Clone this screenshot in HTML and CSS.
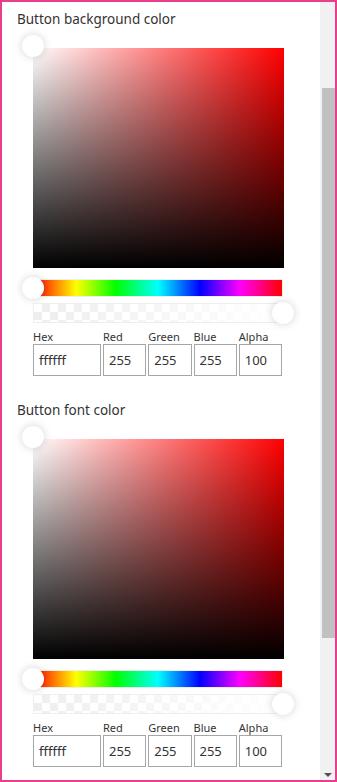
FILE: index.html
```html
<!DOCTYPE html>
<html lang="en">
  <head>
    <meta charset="UTF-8" />
    <meta name="viewport" content="width=device-width, initial-scale=1.0" />
    <title>Button colors</title>
    <link rel="stylesheet" href="styles.css">
  </head>
  <body>
    <div class="frame">
      <div class="content">
        <div class="section">
          <h2 class="section-title">Button background color</h2>
          <div class="picker">
            <div class="saturation">
              <span class="handle handle-sat"></span>
            </div>
            <div class="hue">
              <span class="handle handle-left"></span>
            </div>
            <div class="alpha">
              <span class="handle handle-right"></span>
            </div>
            <div class="fields">
              <label class="field">
                <span class="field-label">Hex</span>
                <input type="text" value="ffffff" />
              </label>
              <label class="field">
                <span class="field-label">Red</span>
                <input type="text" value="255" />
              </label>
              <label class="field">
                <span class="field-label">Green</span>
                <input type="text" value="255" />
              </label>
              <label class="field">
                <span class="field-label">Blue</span>
                <input type="text" value="255" />
              </label>
              <label class="field">
                <span class="field-label">Alpha</span>
                <input type="text" value="100" />
              </label>
            </div>
          </div>
        </div>

        <div class="section">
          <h2 class="section-title">Button font color</h2>
          <div class="picker">
            <div class="saturation">
              <span class="handle handle-sat"></span>
            </div>
            <div class="hue">
              <span class="handle handle-left"></span>
            </div>
            <div class="alpha">
              <span class="handle handle-right"></span>
            </div>
            <div class="fields">
              <label class="field">
                <span class="field-label">Hex</span>
                <input type="text" value="ffffff" />
              </label>
              <label class="field">
                <span class="field-label">Red</span>
                <input type="text" value="255" />
              </label>
              <label class="field">
                <span class="field-label">Green</span>
                <input type="text" value="255" />
              </label>
              <label class="field">
                <span class="field-label">Blue</span>
                <input type="text" value="255" />
              </label>
              <label class="field">
                <span class="field-label">Alpha</span>
                <input type="text" value="100" />
              </label>
            </div>
          </div>
        </div>
      </div>

      <div class="scrollbar">
        <div class="scroll-thumb"></div>
        <div class="scroll-arrow"></div>
      </div>
    </div>
  </body>
</html>
```

FILE: styles.css
```css
* {
  margin: 0;
  padding: 0;
  box-sizing: border-box;
  font-family: "Noto Sans", "Open Sans", Arial, sans-serif;
}

html,
body {
  height: 100%;
  background-color: #fff;
  overflow: hidden;
}

.frame {
  display: flex;
  height: 782px;
  border: 2px solid #e83e8c;
}

.content {
  flex: 1;
  overflow: hidden;
  padding: 7px 0 0 15px;
}

.section {
  margin-bottom: 24px;
}

.section-title {
  font-size: 13.5px;
  font-weight: normal;
  color: #333;
  line-height: 20px;
  margin-bottom: 19px;
}

.picker {
  width: 251px;
  margin-left: 16px;
}

.saturation {
  position: relative;
  height: 220px;
  background:
    linear-gradient(to top, #000, rgba(0, 0, 0, 0)),
    linear-gradient(to right, #fff, rgba(255, 255, 255, 0)),
    #f00;
}

.hue {
  position: relative;
  height: 18px;
  margin-top: 11px;
  width: 250px;
  border: 1px solid #eee;
  background: linear-gradient(
    to right,
    #f00 0%,
    #ff0 17%,
    #0f0 33%,
    #0ff 50%,
    #00f 67%,
    #f0f 83%,
    #f00 100%
  );
}

.alpha {
  position: relative;
  height: 20px;
  margin-top: 6px;
  width: 250px;
  border: 1px solid #eee;
  background:
    linear-gradient(to right, rgba(255, 255, 255, 0), #fff),
    repeating-conic-gradient(#eee 0 25%, #fff 0 50%) 0 0 / 16px 16px;
}

.handle {
  position: absolute;
  width: 22px;
  height: 22px;
  border-radius: 50%;
  background-color: #fff;
  box-shadow: 0 0 8px rgba(0, 0, 0, 0.18);
}

.handle-sat {
  left: -11px;
  top: -13px;
}

.handle-left {
  left: -12px;
  top: -3px;
}

.handle-right {
  right: -12px;
  top: -2px;
}

.fields {
  display: grid;
  grid-template-columns: 68px repeat(4, 1fr);
  gap: 2px;
  width: 249px;
  margin-top: 6px;
}

.field {
  display: flex;
  flex-direction: column;
}

.field-label {
  font-size: 11px;
  color: #333;
  line-height: 15px;
}

.field input {
  width: 100%;
  height: 32px;
  border: 1px solid #a6a6a6;
  padding: 0 5px;
  font-size: 13px;
  color: #333;
  background-color: #fff;
}

.scrollbar {
  display: flex;
  flex-direction: column;
  width: 15px;
  background-color: #f1f1f1;
}

.scroll-thumb {
  height: 550px;
  margin: 86px 0 0 2px;
  background-color: #c1c1c1;
}

.scroll-arrow {
  margin: auto auto 3px 4px;
  width: 0;
  height: 0;
  border-left: 4px solid transparent;
  border-right: 4px solid transparent;
  border-top: 4px solid #505050;
}
```
